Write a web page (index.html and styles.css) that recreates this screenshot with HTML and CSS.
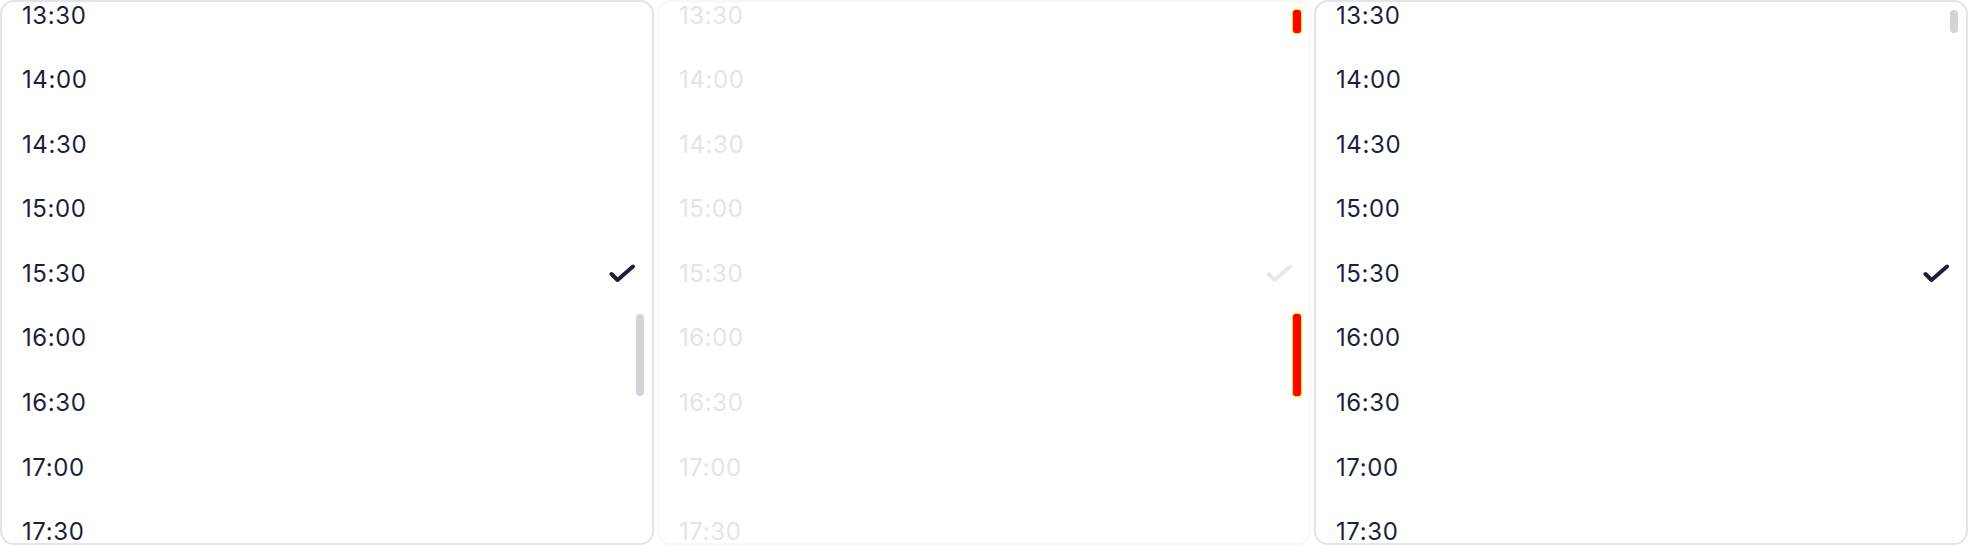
FILE: index.html
```html
<!DOCTYPE html>
<html>
<head>
<meta charset="utf-8">
<link rel="stylesheet" href="styles.css">
</head>
<body>
<div class="panels">
  <div class="panel">
    <ul class="list">
      <li class="row">13:30</li>
      <li class="row">14:00</li>
      <li class="row">14:30</li>
      <li class="row">15:00</li>
      <li class="row selected">15:30<svg class="check" viewBox="0 0 26 19" width="26" height="19"><polyline points="2.5,10 8.5,16 24,2.5" /></svg></li>
      <li class="row">16:00</li>
      <li class="row">16:30</li>
      <li class="row">17:00</li>
      <li class="row">17:30</li>
    </ul>
    <div class="thumb thumb-mid"></div>
  </div>
  <div class="panel faded">
    <ul class="list">
      <li class="row">13:30</li>
      <li class="row">14:00</li>
      <li class="row">14:30</li>
      <li class="row">15:00</li>
      <li class="row selected">15:30<svg class="check" viewBox="0 0 26 19" width="26" height="19"><polyline points="2.5,10 8.5,16 24,2.5" /></svg></li>
      <li class="row">16:00</li>
      <li class="row">16:30</li>
      <li class="row">17:00</li>
      <li class="row">17:30</li>
    </ul>
    <div class="thumb thumb-top debug"></div>
    <div class="thumb thumb-mid debug"></div>
  </div>
  <div class="panel">
    <ul class="list">
      <li class="row">13:30</li>
      <li class="row">14:00</li>
      <li class="row">14:30</li>
      <li class="row">15:00</li>
      <li class="row selected">15:30<svg class="check" viewBox="0 0 26 19" width="26" height="19"><polyline points="2.5,10 8.5,16 24,2.5" /></svg></li>
      <li class="row">16:00</li>
      <li class="row">16:30</li>
      <li class="row">17:00</li>
      <li class="row">17:30</li>
    </ul>
    <div class="thumb thumb-top"></div>
  </div>
</div>
</body>
</html>
```
FILE: styles.css
```css
html, body {
  margin: 0;
  padding: 0;
  background: #ffffff;
}
body {
  font-family: Inter, "Noto Sans", "Liberation Sans", sans-serif;
  width: 1968px;
  height: 546px;
  overflow: hidden;
}
.panels {
  display: grid;
  grid-template-columns: 654px 654px 654px;
  column-gap: 3px;
}
.panel {
  position: relative;
  height: 545px;
  box-sizing: border-box;
  border: 2px solid #e4e4e6;
  border-radius: 14px;
  background: #ffffff;
  overflow: hidden;
  color: #1c1f3b;
}
.list {
  list-style: none;
  margin: -19.3px 0 0 0;
  padding: 0;
}
.row {
  height: 64.6px;
  display: flex;
  align-items: center;
  justify-content: space-between;
  padding: 0 17px 0 20px;
  font-size: 24px;
  letter-spacing: 0.6px;
}
.check {
  display: block;
  fill: none;
  stroke: #1c1f3b;
  stroke-width: 4;
  stroke-linecap: round;
  stroke-linejoin: round;
}
.thumb {
  position: absolute;
  right: 8px;
  width: 8px;
  border-radius: 4px;
  background: #d2d2d8;
}
.thumb-mid {
  top: 312px;
  height: 82px;
}
.thumb-top {
  top: 8px;
  height: 23px;
}
.faded {
  border-color: #f7f7f8;
  color: #e4e4e7;
}
.faded .check {
  stroke: #e8e8ea;
}
.thumb.debug {
  background: #ff0000;
  border-radius: 2px;
  outline: 1px solid #ffe600;
}
```
